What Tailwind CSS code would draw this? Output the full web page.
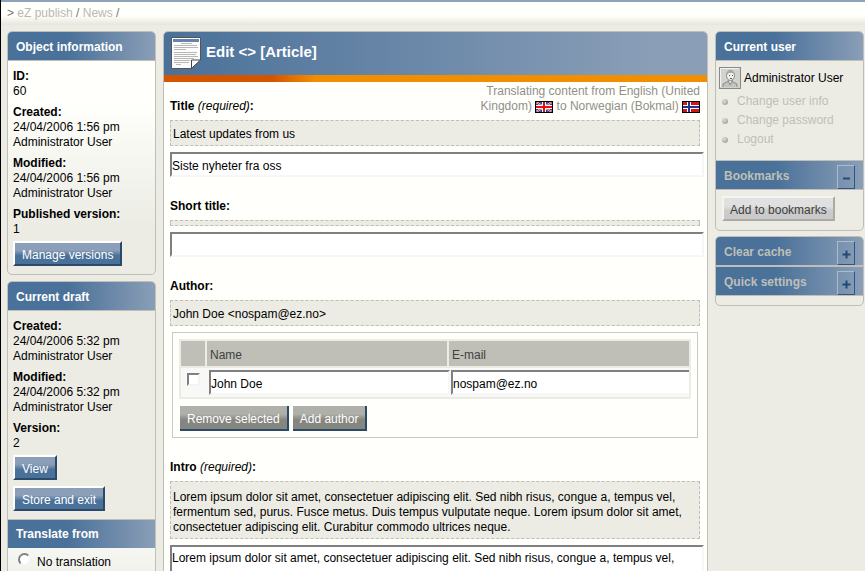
<!DOCTYPE html>
<html lang="en">
<head>
  <meta charset="UTF-8" />
  <meta name="viewport" content="width=device-width, initial-scale=1" />
  <title>eZ publish - Edit Article</title>
  <script src="https://cdn.jsdelivr.net/npm/@tailwindcss/browser@4"></script>
</head>
<body class="h-screen overflow-hidden border-l border-black bg-[#ececE5] font-['Liberation_Sans',Arial,sans-serif] text-[12px] leading-[15px] text-black">

  <!-- Breadcrumb -->
  <nav class="h-[25px] border-t-2 border-[#8fa3ba] bg-linear-to-b from-[#fffffb] from-60% to-[#e6e6de] pt-[4px] pl-[6px] text-[#777]">
    &gt; <a href="#" class="text-[#b9b9b2]">eZ publish</a> / <a href="#" class="text-[#b9b9b2]">News</a> /
  </nav>

  <div class="flex items-start gap-[7px] pt-[6px] pr-px pl-[6px]">

    <!-- Left column -->
    <aside class="flex w-[149px] shrink-0 flex-col gap-[6px]">
      <section class="overflow-hidden rounded-[5px] border border-[#bfbfb7] bg-linear-to-b from-[#fffffb] from-30% to-[#ececE5] to-80%">
        <h2 class="h-[29px] border-b border-[#bfbfb7] bg-linear-to-r from-[#4a7199] from-40% to-[#8a9eb7] pt-[8px] pl-[8px] font-bold text-white">Object information</h2>
        <div class="px-[5px] pt-[8px] pb-[8px]">
          <div class="flex flex-col gap-[6px]">
            <p><b>ID:</b><br />60</p>
            <p><b>Created:</b><br />24/04/2006 1:56 pm<br />Administrator User</p>
            <p><b>Modified:</b><br />24/04/2006 1:56 pm<br />Administrator User</p>
            <p><b>Published version:</b><br />1</p>
          </div>
          <div class="flex flex-col items-start gap-[6px] pt-[4px]">
            <button class="h-[25px] border-2 border-t-white border-r-[#2c4a68] border-b-[#2c4a68] border-l-white bg-linear-to-b from-[#8c9fb8] from-35% to-[#4a7199] to-60% px-[7px] pt-[3px] text-white">Manage versions</button>
          </div>
        </div>
      </section>

      <section class="overflow-hidden rounded-[5px] border border-[#bfbfb7]">
        <h2 class="h-[29px] border-b border-[#bfbfb7] bg-linear-to-r from-[#4a7199] from-40% to-[#8a9eb7] pt-[8px] pl-[8px] font-bold text-white">Current draft</h2>
        <div class="px-[5px] pt-[8px] pb-[8px]">
          <div class="flex flex-col gap-[6px]">
            <p><b>Created:</b><br />24/04/2006 5:32 pm<br />Administrator User</p>
            <p><b>Modified:</b><br />24/04/2006 5:32 pm<br />Administrator User</p>
            <p><b>Version:</b><br />2</p>
          </div>
          <div class="flex flex-col items-start gap-[6px] pt-[4px]">
            <button class="h-[25px] border-2 border-t-white border-r-[#2c4a68] border-b-[#2c4a68] border-l-white bg-linear-to-b from-[#8c9fb8] from-35% to-[#4a7199] to-60% px-[7px] pt-[3px] text-white">View</button>
            <button class="h-[25px] border-2 border-t-white border-r-[#2c4a68] border-b-[#2c4a68] border-l-white bg-linear-to-b from-[#8c9fb8] from-35% to-[#4a7199] to-60% px-[7px] pt-[3px] text-white">Store and exit</button>
          </div>
        </div>
        <h2 class="h-[29px] border-t border-[#bfbfb7] bg-linear-to-r from-[#4a7199] from-40% to-[#8a9eb7] pt-[7px] pl-[8px] font-bold text-white">Translate from</h2>
        <div class="flex gap-[6px] bg-linear-to-b from-[#f6f6f2] to-[#ececE5] px-[10px] pt-[7px] pb-[40px]">
          <input type="radio" id="no-translation" name="translate" class="-mt-[2px] size-[13px] appearance-none rounded-full border-2 border-t-[#808080] border-r-[#f4f4f4] border-b-[#f4f4f4] border-l-[#808080] bg-white" />
          <label for="no-translation">No translation</label>
        </div>
      </section>
    </aside>

    <!-- Edit form -->
    <main class="min-w-0 flex-1 overflow-hidden rounded-[5px] border border-[#bfbfb7] bg-[#fffffb]">
      <header class="flex h-[43px] items-start bg-linear-to-r from-[#4a7199] to-[#8a9eb7] to-90% pt-[5px] pl-[7px]">
        <svg class="h-[32px] w-[30px]" viewBox="0 0 30 32">
          <path d="M.5 .5H29.5V23L20.500 31.500H.5Z" fill="#fcfcfa" stroke="#555" />
          <rect x="2" y="2" width="26" height="3" fill="#6484ad" />
          <path d="M10 6.500H21M3 8.500H26M3 10.500H27M3 12.500H15M3 15.500H26M3 17.500H25M3 19.500H27M3 21.500H23M3 23.500H19M3 25.500H18M5 27.500H10" stroke="#b8b8b8" />
          <path d="M20.500 31.500V23H29.500Z" fill="#fff" stroke="#444" />
        </svg>
        <h1 class="pt-[6px] pl-[5px] text-[15px] leading-[17px] font-bold text-white">Edit &lt;&gt; [Article]</h1>
      </header>
      <div class="h-[7px] bg-linear-to-r from-[#d45500] from-20% to-[#f28f00] to-28%"></div>

      <form class="flex flex-col gap-[22px] pt-[2px] pr-[7px] pb-[8px] pl-[6px]">
        <div class="flex flex-col gap-[6px]">
          <div class="flex items-end justify-between">
            <label for="title" class="font-bold">Title <i class="font-normal">(required)</i>:</label>
            <p class="text-right text-[#90908b]">Translating content from English (United<br />
              Kingdom)
              <svg class="inline h-[12px] w-[18px] align-[-3px]" viewBox="0 0 18 12">
                <rect width="18" height="12" fill="#000" />
                <rect x="1" y="1" width="16" height="10" fill="#2a3fa0" />
                <path d="M1 1L17 11M17 1L1 11" stroke="#fff" stroke-width="2" />
                <path d="M1 1L17 11M17 1L1 11" stroke="#d22" />
                <path d="M9 1V11M1 6H17" stroke="#fff" stroke-width="4" />
                <path d="M9 1V11M1 6H17" stroke="#e01010" stroke-width="2" />
                <rect x=".5" y=".5" width="17" height="11" fill="none" stroke="#000" />
              </svg>
              to Norwegian (Bokmal)
              <svg class="inline h-[12px] w-[18px] align-[-3px]" viewBox="0 0 18 12">
                <rect width="18" height="12" fill="#000" />
                <rect x="1" y="1" width="16" height="10" fill="#d81515" />
                <path d="M7 1V11M1 6H17" stroke="#fff" stroke-width="4" />
                <path d="M7 1V11M1 6H17" stroke="#22348c" stroke-width="2" />
              </svg>
            </p>
          </div>
          <div class="border border-dashed border-[#bfbfb7] bg-[#ececE5] pt-[6px] pb-[3px] pl-[2px]">Latest updates from us</div>
          <input id="title" type="text" value="Siste nyheter fra oss" class="h-[25px] w-[calc(100%+4px)] border-2 border-t-[#808080] border-r-[#f7f7f9] border-b-[#f7f7f9] border-l-[#808080] bg-white pt-[3px]" />
        </div>

        <div class="flex flex-col gap-[6px]">
          <label for="short-title" class="font-bold">Short title:</label>
          <div class="h-[6px] border border-dashed border-[#bfbfb7] bg-[#ececE5]"></div>
          <input id="short-title" type="text" class="h-[25px] w-[calc(100%+4px)] border-2 border-t-[#808080] border-r-[#f7f7f9] border-b-[#f7f7f9] border-l-[#808080] bg-white pt-[3px]" />
        </div>

        <div class="flex flex-col gap-[6px]">
          <h3 class="font-bold">Author:</h3>
          <div class="border border-dashed border-[#bfbfb7] bg-[#ececE5] pt-[6px] pb-[3px] pl-[2px]">John Doe &lt;nospam@ez.no&gt;</div>
          <div class="mx-[2px] border border-[#c8c8c4] px-[6px] pt-[6px] pb-[6px]">
            <table class="w-full table-fixed border-collapse border-2 border-[#ececE5]">
              <thead>
                <tr class="h-[27px] bg-[#bfbfb7] text-left text-[#404040]">
                  <th class="w-[26px] border-2 border-[#ececE5]"></th>
                  <th class="border-2 border-[#ececE5] pt-[3px] pl-[3px] font-normal">Name</th>
                  <th class="border-2 border-[#ececE5] pt-[3px] pl-[3px] font-normal">E-mail</th>
                </tr>
              </thead>
              <tbody>
                <tr class="h-[31px] bg-[#f8f8f6]">
                  <td class="pl-[6px] align-top"><input type="checkbox" aria-label="Select author" class="mt-[5px] block size-[13px] appearance-none border-2 border-t-[#808080] border-r-[#f4f4f4] border-b-[#f4f4f4] border-l-[#808080] bg-white" /></td>
                  <td class="pl-[3px]"><input type="text" aria-label="Name" value="John Doe" class="block h-[25px] w-[calc(100%+2px)] border-2 border-t-[#808080] border-r-[#f7f7f9] border-b-[#f7f7f9] border-l-[#808080] bg-white pt-[3px]" /></td>
                  <td class="pl-[3px]"><input type="text" aria-label="E-mail" value="nospam@ez.no" class="block h-[25px] w-[calc(100%+2px)] border-2 border-t-[#808080] border-r-[#f7f7f9] border-b-[#f7f7f9] border-l-[#808080] bg-white pt-[3px]" /></td>
                </tr>
              </tbody>
            </table>
            <div class="mt-[7px] flex gap-[4px] pl-px">
              <button type="button" class="h-[25px] border-r-2 border-b-2 border-[#2c4a68] bg-linear-to-b from-[#b0b0aa] from-35% to-[#868680] to-60% px-[7px] pt-[3px] text-white">Remove selected</button>
              <button type="button" class="h-[25px] border-r-2 border-b-2 border-[#2c4a68] bg-linear-to-b from-[#b0b0aa] from-35% to-[#868680] to-60% px-[7px] pt-[3px] text-white">Add author</button>
            </div>
          </div>
        </div>

        <div class="flex flex-col gap-[6px]">
          <label for="intro" class="font-bold">Intro <i class="font-normal">(required)</i>:</label>
          <div class="border border-dashed border-[#bfbfb7] bg-[#ececE5] pt-[8px] pb-[3px] pl-[2px]">Lorem ipsum dolor sit amet, consectetuer adipiscing elit. Sed nibh risus, congue a, tempus vel,<br />fermentum sed, purus. Fusce metus. Duis tempus vulputate neque. Lorem ipsum dolor sit amet,<br />consectetuer adipiscing elit. Curabitur commodo ultrices neque.</div>
          <textarea id="intro" rows="8" class="block w-[calc(100%+4px)] resize-none overflow-hidden border-2 border-t-[#808080] border-r-[#f7f7f9] border-b-[#f7f7f9] border-l-[#808080] bg-white pt-[4px]">Lorem ipsum dolor sit amet, consectetuer adipiscing elit. Sed nibh risus, congue a, tempus vel,</textarea>
        </div>
      </form>
    </main>

    <!-- Right column -->
    <aside class="flex w-[149px] shrink-0 flex-col gap-[5px]">
      <section class="overflow-hidden rounded-[5px] border border-[#bfbfb7]">
        <h2 class="h-[29px] border-b border-[#bfbfb7] bg-linear-to-r from-[#4a7199] from-40% to-[#8a9eb7] pt-[8px] pl-[8px] font-bold text-white">Current user</h2>
        <div class="px-[3px] pt-[6px] pb-[11px]">
          <p class="flex items-center gap-[3px]">
            <svg class="size-[22px]" viewBox="0 0 22 22">
              <rect x=".5" y=".5" width="21" height="21" fill="#d2d2ce" stroke="#888" />
              <path d="M1.500 20V1.500H20" fill="none" stroke="#f2f2f0" />
              <path d="M4 20V17L9 14.500H13L18 17V20" fill="#c2c2be" stroke="#888" />
              <path d="M9 13L11 18L13.500 13" fill="#eee" stroke="#888" />
              <ellipse cx="11.500" cy="8.500" rx="4" ry="5" fill="#f0f0ee" stroke="#888" />
              <path d="M7.500 8Q7 3 11.500 3.500Q16 3 15.500 8L14 6L10 6Z" fill="#aaa" />
              <path d="M10 8.500H11M13 8.500H14M11 11.500H13" stroke="#555" />
            </svg>
            Administrator User
          </p>
          <ul class="pt-[3px] pl-[3px] leading-[19px] text-[#bfbfb7]">
            <li class="flex items-center gap-[9px]"><span class="size-[6px] rounded-full bg-radial-[at_35%_30%] from-[#ddd] to-[#92928e]"></span><a href="#">Change user info</a></li>
            <li class="flex items-center gap-[9px]"><span class="size-[6px] rounded-full bg-radial-[at_35%_30%] from-[#ddd] to-[#92928e]"></span><a href="#">Change password</a></li>
            <li class="flex items-center gap-[9px]"><span class="size-[6px] rounded-full bg-radial-[at_35%_30%] from-[#ddd] to-[#92928e]"></span><a href="#">Logout</a></li>
          </ul>
        </div>
        <div class="flex h-[30px] items-end justify-between border-y border-[#bfbfb7] bg-linear-to-r from-[#4a7199] from-40% to-[#8a9eb7] pr-[8px] pl-[8px]">
          <h2 class="pb-[5px] font-bold text-[#bfbfb7]">Bookmarks</h2>
          <button aria-label="Collapse bookmarks" class="flex h-[24px] w-[18px] items-center justify-center border border-t-[#a9bdd2] border-r-[#2f5680] border-b-[#2f5680] border-l-[#a9bdd2] pt-[3px]">
            <svg class="size-[9px]" viewBox="0 0 9 9"><path d="M1 4.500H8" stroke="#204a78" stroke-width="2" /></svg>
          </button>
        </div>
        <div class="px-[6px] pt-[6px] pb-[9px]">
          <button class="block h-[25px] border-2 border-t-[#f4f4f0] border-r-[#a9a9a5] border-b-[#a9a9a5] border-l-[#f4f4f0] bg-linear-to-b from-[#e0e0e0] from-40% to-[#cacaca] to-60% px-[6px] pt-[3px] text-[#404040]">Add to bookmarks</button>
        </div>
      </section>

      <section class="overflow-hidden rounded-[5px] border border-[#bfbfb7] pb-[9px]">
        <div class="flex h-[29px] items-end justify-between border-b border-[#bfbfb7] bg-linear-to-r from-[#4a7199] from-40% to-[#8a9eb7] pr-[8px] pl-[8px]">
          <h2 class="pb-[5px] font-bold text-[#bfbfb7]">Clear cache</h2>
          <button aria-label="Expand clear cache" class="flex h-[24px] w-[18px] items-center justify-center border border-t-[#a9bdd2] border-r-[#2f5680] border-b-[#2f5680] border-l-[#a9bdd2] pt-[3px]">
            <svg class="size-[9px]" viewBox="0 0 9 9"><path d="M.5 4.500H8.500M4.500 .5V8.500" stroke="#204a78" stroke-width="2" /></svg>
          </button>
        </div>
        <div class="flex h-[30px] items-end justify-between border-y border-[#bfbfb7] bg-linear-to-r from-[#4a7199] from-40% to-[#8a9eb7] pr-[8px] pl-[8px]">
          <h2 class="pb-[5px] font-bold text-[#bfbfb7]">Quick settings</h2>
          <button aria-label="Expand quick settings" class="flex h-[24px] w-[18px] items-center justify-center border border-t-[#a9bdd2] border-r-[#2f5680] border-b-[#2f5680] border-l-[#a9bdd2] pt-[3px]">
            <svg class="size-[9px]" viewBox="0 0 9 9"><path d="M.5 4.500H8.500M4.500 .5V8.500" stroke="#204a78" stroke-width="2" /></svg>
          </button>
        </div>
      </section>
    </aside>
  </div>
</body>
</html>
